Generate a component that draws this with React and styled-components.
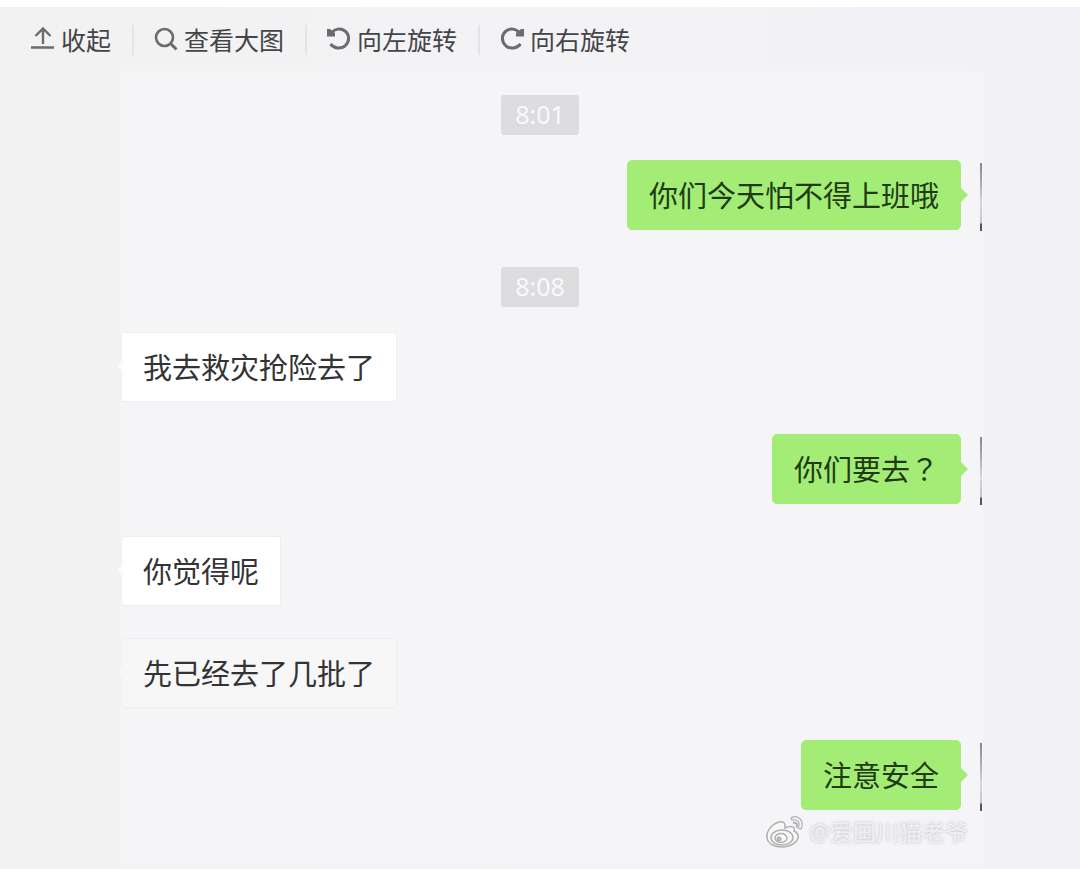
import React from "react";
import styled, { createGlobalStyle } from "styled-components";

const GlobalStyle = createGlobalStyle`
  * {
    box-sizing: border-box;
  }

  body {
    margin: 0;
    background: #f3f3f5;
    font-family: "Noto Sans", "Noto Sans CJK SC", sans-serif;
  }
`;

const Page = styled.div`
  display: flex;
  flex-direction: column;
  min-height: 100vh;
  border-top: 7px solid #fff;
  background: linear-gradient(to right, #f2f2f3, #f3f3f5 50%, #f2f1f6) padding-box;
`;

const Toolbar = styled.nav`
  display: flex;
  align-items: center;
  height: 64px;
  padding: 2px 10px 0;
`;

const ToolButton = styled.button`
  display: flex;
  align-items: center;
  gap: 6px;
  padding: 0 21px 2px;
  border: none;
  background: none;
  color: #454549;
  font-family: "Noto Sans CJK SC", sans-serif;
  font-size: 25px;
  line-height: 28px;
  white-space: nowrap;
  cursor: pointer;

  & + & {
    padding-left: 20px;
    border-left: 2px solid #e4e4e7;
  }

  svg {
    flex: none;
    width: 24px;
    height: 24px;
    fill: none;
    stroke: #6c6c70;
    stroke-width: 3;
  }
`;

const Panel = styled.main`
  flex: 1;
  margin: 0 97px 4px 120px;
  padding: 24px 1px 0;
  background: #f5f4f7;
`;

const TimeRow = styled.div`
  display: flex;
  justify-content: center;
  margin: 37px 0 25px;
  padding-right: 23px;

  &:first-child {
    margin-top: 0;
  }
`;

const Time = styled.time`
  padding: 0 14px 2px;
  border-radius: 3px;
  background: #dddde0;
  color: #f9f9fa;
  font-size: 25px;
  line-height: 38px;
`;

const Row = styled.div`
  display: flex;
  justify-content: ${(p) => (p.$sent ? "flex-end" : "flex-start")};
  margin-bottom: 32px;
`;

const Bubble = styled.div`
  position: relative;
  padding: 0 21px 2px;
  border: 1px solid ${(p) => (p.$sent ? "#a3ea77" : "#eeeef0")};
  border-radius: ${(p) => (p.$sent ? 5 : 3)}px;
  background: ${(p) => (p.$sent ? "#a3ed76" : p.$faded ? "#f7f7f8" : "#fff")};
  color: ${(p) => (p.$sent ? "#1f3a14" : "#333336")};
  font-family: "Noto Sans CJK SC", sans-serif;
  font-size: 29px;
  line-height: 66px;

  &::after {
    content: "";
    position: absolute;
    top: ${(p) => (p.$sent ? 26 : 28)}px;
    ${(p) => (p.$sent ? "left" : "right")}: 100%;
    border: ${(p) => (p.$sent ? 8 : 5)}px solid transparent;
    border-${(p) => (p.$sent ? "left" : "right")}-color: ${(p) => (p.$sent ? "#a3ea77" : p.$faded ? "#f7f7f8" : "#fbfbfc")};
    border-${(p) => (p.$sent ? "right" : "left")}-width: 0;
  }
`;

// the TC face centres full width punctuation in its box
const Mark = styled.span`
  font-family: "Noto Sans CJK TC", sans-serif;
`;

// only the very edge of the avatar is visible
const AvatarEdge = styled.span`
  width: 2px;
  height: 68px;
  margin: 3px 0 -1px 19px;
  background: linear-gradient(#85888f, #a9adb3 30%, #d6d8db 60%, #c4c5c8 88%, #55565a 90%);
`;

const Watermark = styled.footer`
  display: flex;
  align-items: center;
  justify-content: flex-end;
  gap: 4px;
  margin-top: -30px;
  padding-right: 14px;
  color: #f1f1f3;
  font-size: 23px;
  line-height: 40px;
  text-shadow: 0 0 2px #c4c4c7, 0 0 4px #dcdcdf;

  svg {
    width: 40px;
    height: 36px;
    fill: none;
    stroke: #b0b0b3;
    stroke-width: 2;
  }
`;

const CollapseIcon = () => (
  <svg viewBox="0 0 24 24" aria-hidden="true">
    <path d="M0 20.5H23M12 17V2.5M4.5 9L12 1.5L19.5 9" strokeWidth="2.4" />
  </svg>
);

const SearchIcon = () => (
  <svg viewBox="0 0 24 24" aria-hidden="true">
    <circle cx="10.5" cy="10.5" r="8.5" strokeWidth="2.6" />
    <path d="M16.5 16.5L22.5 22.5" />
  </svg>
);

const RotateIcon = ({ right }) => (
  <svg viewBox="0 0 24 24" aria-hidden="true">
    <g transform={right ? "translate(24 0) scale(-1 1)" : undefined}>
      <path d="M5 5.5C8 1.5 14 1 18 4C23 8 22.5 15 18 19C13.5 22.5 7 21.5 3.5 17" />
      <path d="M0 2H3L5.5 4L8 6V9.5H0Z" fill="#6c6c70" stroke="none" />
    </g>
  </svg>
);

const WeiboIcon = () => (
  <svg viewBox="0 0 40 36" aria-hidden="true">
    <path d="M14 8C7 10 1 17 2 24C4 36 29 36 33 24C34 20 31 18 29 17C31 13 26 11 20 14C21 9 18 7 14 8Z" fill="#f8f8f9" strokeWidth="1.5" />
    <ellipse cx="17" cy="23.5" rx="11" ry="7.5" strokeWidth="1.5" />
    <ellipse cx="16" cy="24" rx="6" ry="4.5" strokeWidth="1.5" />
    <circle cx="14" cy="25" r="1.5" />
    <path d="M26 4C33 0 40 7 36 15L33 14C36 8 32 5 27 6Z" strokeWidth="1.2" />
    <path d="M28 9C32 8 33 11 31 13" />
  </svg>
);

const tools = [
  { label: "收起", icon: <CollapseIcon /> },
  { label: "查看大图", icon: <SearchIcon /> },
  { label: "向左旋转", icon: <RotateIcon /> },
  { label: "向右旋转", icon: <RotateIcon right /> },
];

const messages = [
  { time: "8:01" },
  { text: "你们今天怕不得上班哦", sent: true },
  { time: "8:08" },
  { text: "我去救灾抢险去了" },
  { text: "你们要去", mark: "？", sent: true },
  { text: "你觉得呢" },
  { text: "先已经去了几批了", faded: true },
  { text: "注意安全", sent: true },
];

const App = () => {
  return (
    <>
      <GlobalStyle />
      <Page>
        <Toolbar>
          {tools.map((tool) => (
            <ToolButton key={tool.label} type="button">
              {tool.icon}
              {tool.label}
            </ToolButton>
          ))}
        </Toolbar>
        <Panel>
          {messages.map((msg, index) =>
            msg.time ? (
              <TimeRow key={index}>
                <Time>{msg.time}</Time>
              </TimeRow>
            ) : (
              <Row key={index} $sent={msg.sent}>
                <Bubble $sent={msg.sent} $faded={msg.faded}>
                  {msg.text}
                  {msg.mark && <Mark>{msg.mark}</Mark>}
                </Bubble>
                {msg.sent && <AvatarEdge />}
              </Row>
            )
          )}
          <Watermark>
            <WeiboIcon />
            @爱国川猫老爷
          </Watermark>
        </Panel>
      </Page>
    </>
  );
};

export default App;
